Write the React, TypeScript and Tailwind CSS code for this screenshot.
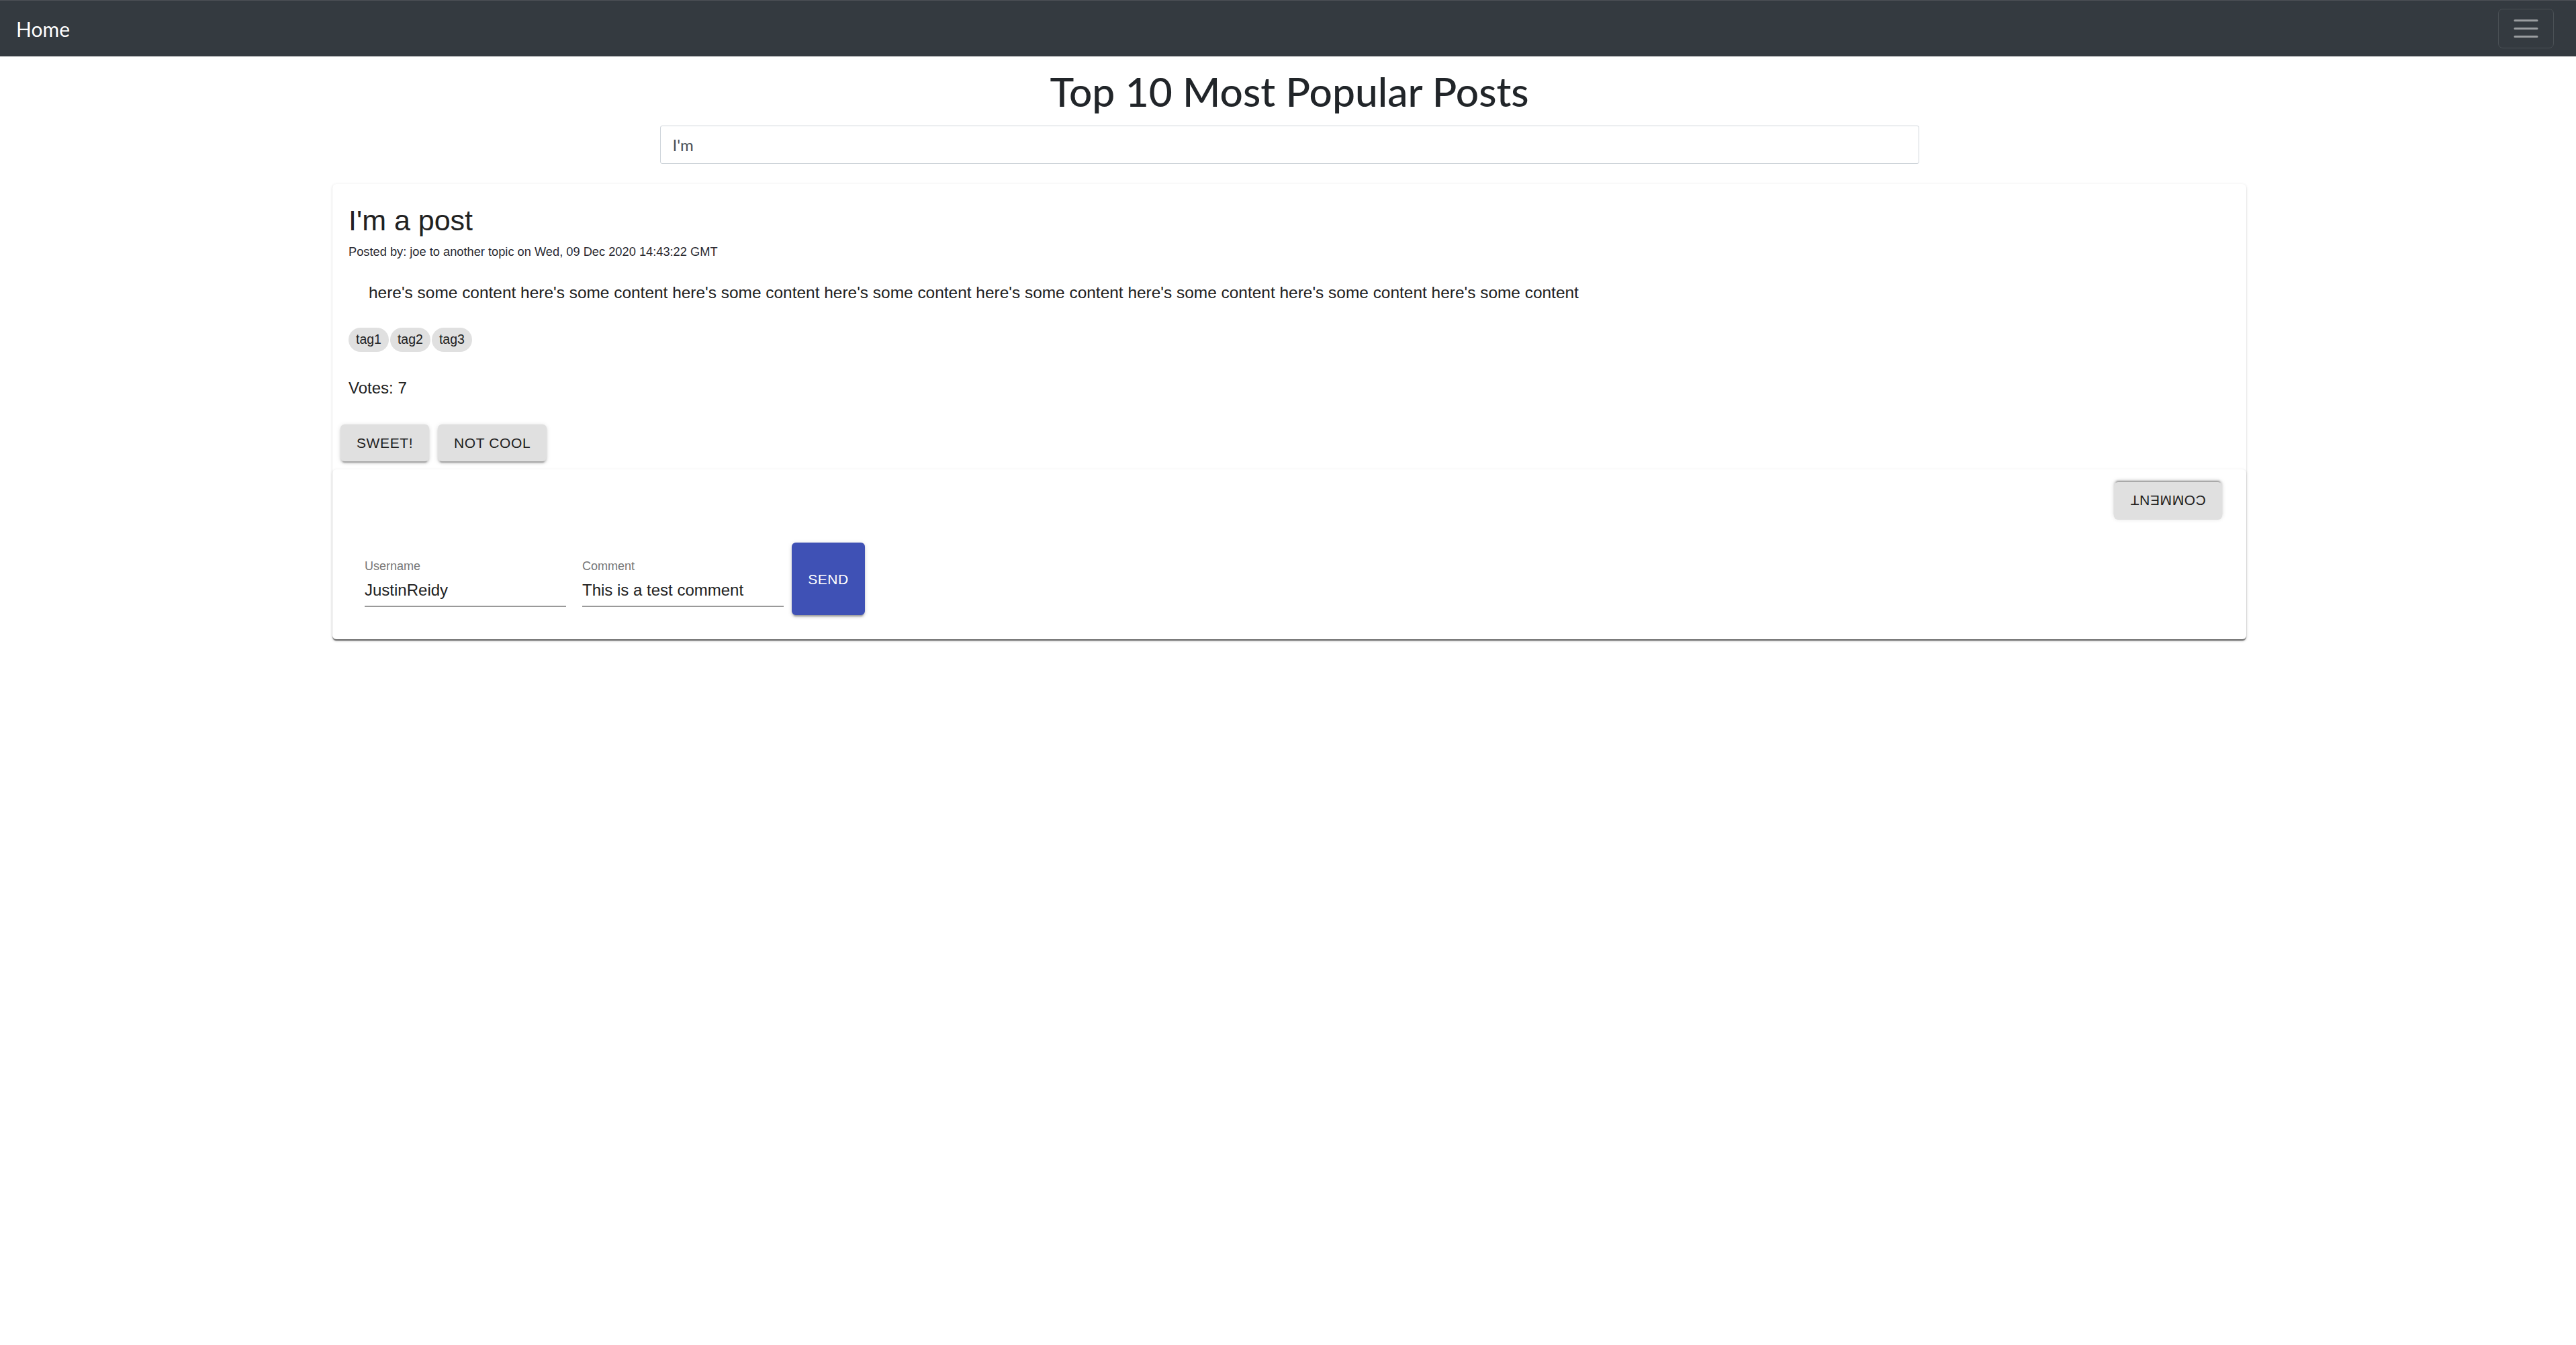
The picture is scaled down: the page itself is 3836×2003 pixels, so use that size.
import React from "react";

const MUI = "font-['Liberation_Sans',Arial,sans-serif]";
const BS = "font-['Lato','Open_Sans',sans-serif]";

const paperShadow =
  "shadow-[0_3px_1.5px_-1.5px_rgba(0,0,0,0.2),0_1.5px_1.5px_0_rgba(0,0,0,0.14),0_1.5px_4.5px_0_rgba(0,0,0,0.12)]";
const btnShadow =
  "shadow-[0_4.5px_1.5px_-3px_rgba(0,0,0,0.2),0_3px_3px_0_rgba(0,0,0,0.14),0_1.5px_7.5px_0_rgba(0,0,0,0.12)]";

function Chip({ label }: { label: string }) {
  return (
    <span className="inline-flex h-[36px] items-center rounded-full bg-[#e0e0e0] px-[11px] text-[19.5px] leading-none text-[#212121]">
      {label}
    </span>
  );
}

function GreyButton({ label, extra = "" }: { label: string; extra?: string }) {
  return (
    <button
      className={`flex h-[55px] items-center justify-center rounded-[6px] bg-[#e0e0e0] px-[24px] text-[21px] uppercase leading-none tracking-[0.6px] text-[#212121] ${btnShadow} ${extra}`}
    >
      {label}
    </button>
  );
}

function Field({ label, value }: { label: string; value: string }) {
  return (
    <div className="mt-[26px] flex w-[300px] flex-col">
      <span className="text-[18px] leading-[18px] text-[#757575]">{label}</span>
      <div className="mt-[9px] border-b-2 border-[#9a9a9a] pb-[5px]">
        <span className="block text-[24px] leading-[36px] text-[#212121]">{value}</span>
      </div>
    </div>
  );
}

export default function App() {
  return (
    <div className="min-h-[2003px] w-full bg-white">
      {/* Navbar */}
      <nav className={`flex h-[84px] items-center justify-between border-t border-[#4d5156] bg-[#343a40] pl-[24px] pr-[33px] ${BS}`}>
        <span className="mt-[2px] text-[30px] leading-[45px] text-white">Home</span>
        <button className="flex h-[59px] w-[83px] items-center justify-center rounded-[7px] border-[1.5px] border-[#4a5055]">
          <svg width="45" height="45" viewBox="0 0 30 30">
            <path
              d="M4 7h22M4 15h22M4 23h22"
              stroke="rgba(255,255,255,0.5)"
              strokeWidth="2"
              strokeLinecap="round"
              strokeMiterlimit="10"
            />
          </svg>
        </button>
      </nav>

      <div className="pl-[4px]">
        {/* Title */}
        <h1 className={`mt-[16px] text-center text-[60.5px] font-medium leading-[72px] text-[#212529] ${BS}`}>
          Top 10 Most Popular Posts
        </h1>

        {/* Search */}
        <div className="mx-auto mt-[15px] w-[1875px]">
          <div className={`flex h-[57px] items-center rounded-[3px] border border-[#ced4da] bg-white px-[18px] text-[24px] text-[#495057] ${BS}`}>
            I'm
          </div>
        </div>

        {/* Card */}
        <div className={`mx-auto mt-[30px] w-[2850px] rounded-[6px] bg-white ${paperShadow} ${MUI}`}>
          <div className="px-[24px] pb-[24px] pt-[29px]">
            <h3 className="text-[43px] leading-[50px] text-[#212121]">I'm a post</h3>
            <div className="mt-[8px] text-[18.25px] leading-[27px] text-[#2b2b33]">
              Posted by: joe to another topic on Wed, 09 Dec 2020 14:43:22 GMT
            </div>
            <p className="mt-[30px] pl-[30px] text-[24.45px] leading-[36px] text-[#212121]">
              here's some content here's some content here's some content here's some content here's some content here's some content here's some content here's some content
            </p>
            <div className="mt-[34px] flex gap-[2px]">
              <Chip label="tag1" />
              <Chip label="tag2" />
              <Chip label="tag3" />
            </div>
            <div className="mt-[36px] text-[24px] leading-[36px] text-[#212121]">Votes: 7</div>
          </div>

          <div className="flex gap-[13px] p-[12px]">
            <GreyButton label="SWEET!" />
            <GreyButton label="NOT COOL" />
          </div>

          <div className={`rounded-[6px] bg-white pb-[36px] pr-[36px] pt-[19px] ${paperShadow}`}>
            <div className="flex justify-end">
              <GreyButton label="Comment" extra="rotate-180 w-[161px] h-[56px]" />
            </div>
            <div className="mt-[34px] flex items-start pl-[48px]">
              <Field label="Username" value="JustinReidy" />
              <div className="w-[24px]" />
              <Field label="Comment" value="This is a test comment" />
              <button
                className={`ml-[12px] flex h-[108px] w-[109px] items-center justify-center rounded-[6px] bg-[#3f51b5] text-[21px] uppercase leading-none tracking-[0.6px] text-white ${btnShadow}`}
              >
                Send
              </button>
            </div>
          </div>
        </div>
      </div>
    </div>
  );
}
